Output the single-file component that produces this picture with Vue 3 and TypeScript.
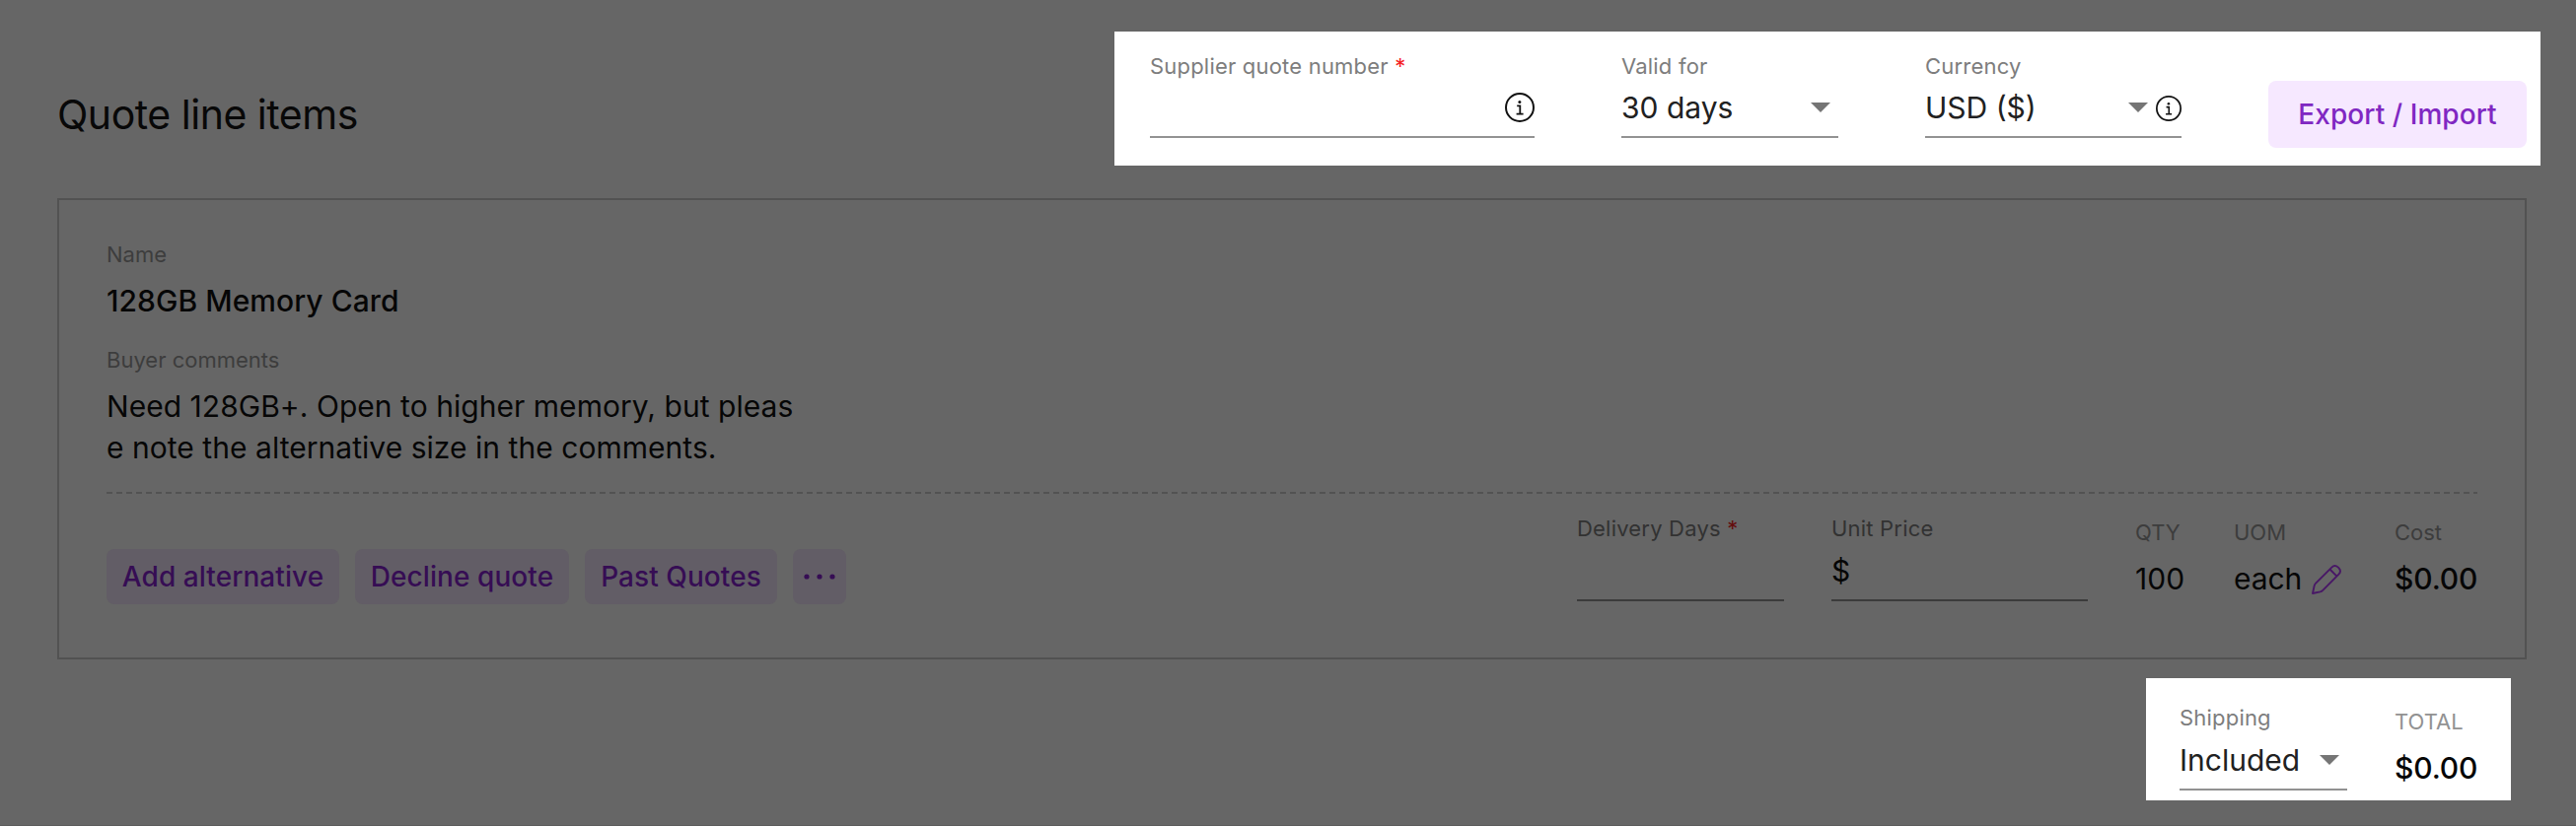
<script setup lang="ts">
import { ref } from 'vue'

interface Action {
  id: string
  label: string
}

const actions: Action[] = [
  { id: 'add', label: 'Add alternative' },
  { id: 'decline', label: 'Decline quote' },
  { id: 'past', label: 'Past Quotes' },
]

const validFor = ref('30 days')
const currency = ref('USD ($)')
const shipping = ref('Included')
const quantity = ref(100)
const unit = ref('each')
const cost = ref('$0.00')
const commentLines = ['Need 128GB+. Open to higher memory, but pleas', 'e note the alternative size in the comments.']
</script>

<template>
  <main class="page">
    <header class="header">
      <h1 class="title">Quote line items</h1>
      <section class="toolbar">
        <div class="field supplier">
          <label class="label">Supplier quote number <span class="req">*</span></label>
          <div class="control">
            <svg class="info-lg" viewBox="0 0 30 30">
              <circle cx="15" cy="15" r="14" fill="none" stroke="#111" stroke-width="2" />
              <circle cx="14.9" cy="9.5" r="1.5" fill="#111" />
              <path d="M12.2 13.4H15.3V21.6M11.6 21.7H18.6" fill="none" stroke="#111" stroke-width="1.8" />
            </svg>
          </div>
        </div>
        <div class="field valid">
          <label class="label">Valid for</label>
          <div class="control"><span>{{ validFor }}</span><i class="caret" /></div>
        </div>
        <div class="field currency">
          <label class="label">Currency</label>
          <div class="control">
            <span>{{ currency }}</span><i class="caret" />
            <svg class="info-sm" viewBox="0 0 30 30">
              <circle cx="15" cy="15" r="14" fill="none" stroke="#111" stroke-width="2" />
              <circle cx="14.9" cy="9.5" r="1.5" fill="#111" />
              <path d="M12.2 13.4H15.3V21.6M11.6 21.7H18.6" fill="none" stroke="#111" stroke-width="1.8" />
            </svg>
          </div>
        </div>
        <button class="export" type="button">Export / Import</button>
      </section>
    </header>

    <article class="card">
      <div class="caption">Name</div>
      <div class="name">128GB Memory Card</div>
      <div class="caption comments-label">Buyer comments</div>
      <div class="comments">
        <div v-for="line in commentLines" :key="line">{{ line }}</div>
      </div>
      <svg class="divider" height="2" width="2404">
        <line x1="0" y1="1" x2="2404" y2="1" stroke="#525252" stroke-width="2" stroke-dasharray="6 4" />
      </svg>
      <div class="line-row">
        <div class="actions">
          <button v-for="action in actions" :key="action.id" class="action" :class="action.id" type="button">{{ action.label }}</button>
          <button class="action more" type="button" aria-label="More">
            <svg width="34" height="6" viewBox="0 0 34 6">
              <circle cx="4" cy="3" r="2.6" /><circle cx="17" cy="3" r="2.6" /><circle cx="30" cy="3" r="2.6" />
            </svg>
          </button>
        </div>
        <div class="field dim delivery">
          <label class="label">Delivery Days <span class="req">*</span></label>
          <div class="control" />
        </div>
        <div class="field dim price">
          <label class="label">Unit Price</label>
          <div class="control"><span>$</span></div>
        </div>
        <div class="stat qty"><div class="caption">QTY</div><div class="value">{{ quantity }}</div></div>
        <div class="stat uom">
          <div class="caption">UOM</div>
          <div class="value unit">
            <span>{{ unit }}</span>
            <svg class="pencil" viewBox="0 0 30 30">
              <path d="M1 29L2.6 21.4Q3 19.9 4.2 18.7L20.3 2.6Q23.4-.4 26.6 2.4L27.6 3.4Q30.4 6.6 27.4 9.7L11.3 25.8Q10.1 27 8.6 27.4ZM18.4 4.5L25.5 11.6" fill="none" stroke="#481766" stroke-width="1.9" stroke-linejoin="round" />
            </svg>
          </div>
        </div>
        <div class="stat cost"><div class="caption">Cost</div><div class="value strong">{{ cost }}</div></div>
      </div>
    </article>

    <section class="totals">
      <div class="field shipping">
        <label class="label">Shipping</label>
        <div class="control"><span>{{ shipping }}</span><i class="caret" /></div>
      </div>
      <div class="stat">
        <div class="caption">TOTAL</div>
        <div class="value strong">{{ cost }}</div>
      </div>
    </section>
  </main>
</template>

<style>
body { margin: 0; background: #666; }
</style>

<style scoped>
* { box-sizing: border-box; }
.page { width: 2612px; height: 838px; padding: 32px 36px 0 58px; overflow: hidden; background: #666; border-bottom: 1px solid #5c5c5c; font-family: Inter, "Liberation Sans", sans-serif; font-size: 30px; color: #060606; }
.header { display: flex; justify-content: space-between; height: 169px; }
.title { margin: 60px 0 0; font: 400 41px/48px Inter, sans-serif; letter-spacing: -.48px; color: #080808; white-space: nowrap; }
.toolbar { display: flex; width: 1446px; height: 136px; padding: 0 0 0 36px; background: #fff; }
.field { display: flex; flex-direction: column; padding-top: 20px; }
.label { height: 30px; font-size: 22px; line-height: 30px; color: #7d7d7d; letter-spacing: .2px; white-space: nowrap; }
.req { color: #f52020; }
.control { display: flex; align-items: center; height: 58px; padding-bottom: 2px; border-bottom: 2px solid #929292; color: #212121; white-space: nowrap; }
.caret { width: 0; height: 0; margin-left: auto; border: 10px solid transparent; border-top-color: #757575; border-bottom: 0; }
.supplier { width: 390px; margin-right: 88px; }
.valid { width: 220px; margin-right: 88px; }
.valid .caret { margin-right: 8px; }
.currency { width: 260px; margin-right: 88px; }
.currency .caret { margin-right: 8px; }
.info-lg { width: 30px; height: 30px; margin-left: auto; }
.info-sm { width: 26px; height: 26px; margin-top: 2px; }
button { border: 0; padding: 0; font: 500 28px/34px Inter, sans-serif; letter-spacing: .07px; }
.export { width: 258px; height: 68px; margin-top: 50px; border-radius: 8px; background: #f6e8ff; color: #8027c2; }
.card { width: 2504px; height: 468px; padding: 40px 48px 0; border: 2px solid #525252; }
.caption { height: 30px; font-size: 22px; line-height: 30px; color: #3d3d3d; white-space: nowrap; }
.name { margin-top: 11px; height: 42px; line-height: 42px; font-weight: 500; letter-spacing: .05px; }
.comments-label { margin-top: 24px; }
.comments { margin-top: 11px; line-height: 42px; letter-spacing: .04px; white-space: nowrap; }
.divider { display: block; margin-top: 24px; }
.line-row { display: flex; height: 120px; }
.line-row > * { flex-shrink: 0; }
.actions { display: flex; gap: 16px; width: 1491px; padding-top: 56px; }
.action { height: 56px; border-radius: 8px; background: #625d66; color: #360d54; }
.add { width: 236px; }
.decline { width: 217px; }
.past { width: 195px; }
.more { width: 54px; display: flex; align-items: center; justify-content: center; fill: #360d54; }
.export { width: 262px; }
.dim { padding-top: 21px; }
.dim .label { line-height: 29px; color: #323232; }
.dim .req { color: #640c0c; }
.dim .control { border-color: #3b3b3b; color: #060606; }
.delivery { width: 210px; margin-right: 48px; }
.price { width: 260px; margin-right: 48px; }
.stat { padding-top: 24px; }
.value { margin-top: 11px; height: 42px; line-height: 42px; white-space: nowrap; }
.qty { width: 100px; }
.uom { width: 163px; }
.unit { display: flex; align-items: center; gap: 10px; letter-spacing: -.1px; }
.pencil { width: 30px; height: 30px; margin-top: 1px; }
.strong { font-weight: 500; letter-spacing: -.15px; }
.totals { display: flex; width: 370px; height: 124px; margin: 19px 0 0 2118px; padding-left: 34px; background: #fff; }
.totals .caption { color: #929292; }
.shipping { width: 170px; margin-right: 48px; padding-top: 26px; }
.shipping .label { line-height: 29px; }
.shipping .caret { margin-right: 8px; }
.totals .stat { padding-top: 29px; }
</style>
